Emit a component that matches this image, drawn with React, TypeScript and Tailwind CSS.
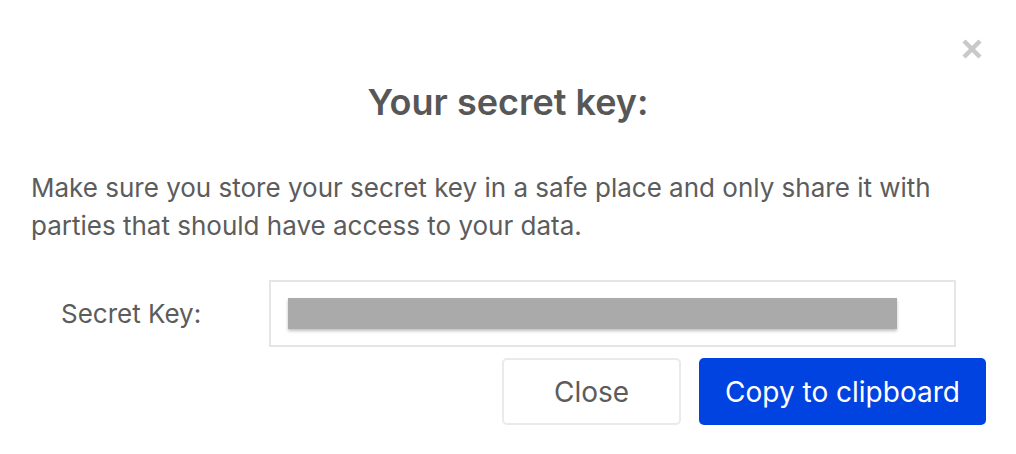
export default function App() {
  return (
    <div
      className="h-[454px] w-[1016px] bg-white text-[#5c5c5c]"
      style={{ fontFamily: "Inter, 'Noto Sans', sans-serif" }}
    >
      <div className="flex justify-end pr-[33px] pt-[38px]">
        <button aria-label="Close" className="size-[22px] text-[#c9c9c9]">
          <svg viewBox="0 0 22 22" className="size-[22px]">
            <path d="M3 3 L19 19 M19 3 L3 19" stroke="currentColor" strokeWidth="4.5" strokeLinecap="butt" />
          </svg>
        </button>
      </div>

      <h2 className="mt-[22px] text-center text-[36px] font-semibold leading-[40px] text-[#575757]">
        Your secret key:
      </h2>

      <p className="mt-[47px] px-[31px] text-[26px] leading-[38px]">
        Make sure you store your secret key in a safe place and only share it with
        parties that should have access to your data.
      </p>

      <div className="mt-[35px] flex items-center">
        <span className="w-[269px] pl-[61px] text-[26px]">Secret Key:</span>
        <div className="flex h-[67px] w-[687px] items-center border-2 border-[#e5e5e5] pl-[17px]">
          <div className="h-[31px] w-[609px] bg-[#aaaaaa] shadow-[0_2px_3px_rgba(0,0,0,0.25)]" />
        </div>
      </div>

      <div className="mt-[11px] flex justify-end gap-[18px] pr-[30px]">
        <button className="h-[67px] w-[179px] rounded-[5px] border-2 border-[#e8eaed] bg-white text-[28px] text-[#5c5c5c]">
          Close
        </button>
        <button className="h-[67px] w-[287px] rounded-[5px] bg-[#0043e1] text-[28px] text-white">
          Copy to clipboard
        </button>
      </div>
    </div>
  );
}
